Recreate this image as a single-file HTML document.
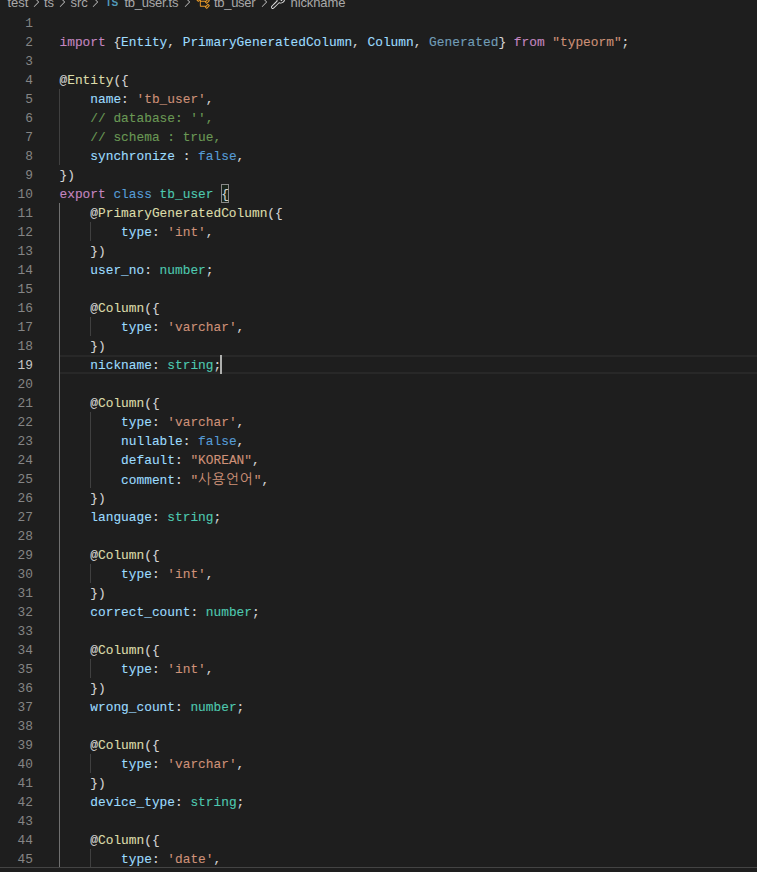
<!DOCTYPE html>
<html lang="en">
<head>
<meta charset="utf-8">
<title>tb_user.ts</title>
<style>
html,body{margin:0;padding:0;background:#1e1e1e;}
body{width:757px;height:872px;overflow:hidden;position:relative;font-family:"Liberation Mono","NanumGothic",monospace;}
#ed{position:absolute;left:0;top:0;width:757px;height:872px;overflow:hidden;background:#1e1e1e;}
.ln{position:absolute;left:0;width:33px;height:19px;line-height:19px;text-align:right;color:#858585;font-size:12.83px;white-space:pre;}
.ln.act{color:#c6c6c6;}
.cl{-webkit-text-stroke:0.1px currentColor;position:absolute;left:59.5px;height:19px;line-height:19px;color:#d4d4d4;font-size:12.83px;white-space:pre;}
.k{color:#c586c0}.b{color:#569cd6}.v{color:#9cdcfe}.s{color:#ce9178}.f{color:#dcdcaa}.t{color:#4ec9b0}.c{color:#6a9955}
.u{color:#9cdcfe;opacity:.67}
.ko{color:#ce9178;font-family:"NanumGothic","Noto Sans CJK KR",sans-serif;font-size:14px;letter-spacing:0.75px;-webkit-text-stroke:0;}
#bm{position:absolute;left:221px;top:184px;width:7.5px;height:19px;box-sizing:border-box;border:1px solid #888;background:rgba(0,100,0,.1)}
.ig{position:absolute;width:1px;background:#404040;}
.ig.a{background:#707070;}
#hl{position:absolute;left:60px;right:0;top:355px;height:15px;border-top:2px solid #282828;border-bottom:2px solid #282828;}
#cur{position:absolute;left:220px;top:355px;width:2px;height:19px;background:#aeafad;}
#bc{position:absolute;left:0;top:-8px;height:22px;line-height:22px;width:757px;color:#a9a9a9;font-family:"Liberation Sans",sans-serif;font-size:13px;white-space:pre;}
#bc span.i{position:absolute;top:0}
#bc svg.ch{position:absolute;top:2px}
#bc span.ts{color:#519aba;font-size:10px;font-weight:bold;top:-0.5px}
#bot{position:absolute;left:0;right:0;top:867px;height:1px;background:#444;}
</style>
</head>
<body>
<div id="ed">
<div id="hl"></div>
<div id="bm"></div>
<div class="ig" style="left:59px;top:89px;height:76px"></div>
<div class="ig a" style="left:59px;top:203px;height:665px"></div>
<div class="ig" style="left:90px;top:222px;height:19px"></div>
<div class="ig" style="left:90px;top:317px;height:19px"></div>
<div class="ig" style="left:90px;top:412px;height:76px"></div>
<div class="ig" style="left:90px;top:564px;height:19px"></div>
<div class="ig" style="left:90px;top:659px;height:19px"></div>
<div class="ig" style="left:90px;top:754px;height:19px"></div>
<div class="ig" style="left:90px;top:849px;height:19px"></div>
<div class="ln" style="top:14px">1</div>
<div class="ln" style="top:33px">2</div>
<div class="cl" style="top:33px"><span class="k">import</span> {<span class="v">Entity</span>, <span class="v">PrimaryGeneratedColumn</span>, <span class="v">Column</span>, <span class="u">Generated</span>} <span class="k">from</span> <span class="s">"typeorm"</span>;</div>
<div class="ln" style="top:52px">3</div>
<div class="ln" style="top:71px">4</div>
<div class="cl" style="top:71px">@<span class="f">Entity</span>({</div>
<div class="ln" style="top:90px">5</div>
<div class="cl" style="top:90px">    <span class="v">name</span>: <span class="s">'tb_user'</span>,</div>
<div class="ln" style="top:109px">6</div>
<div class="cl" style="top:109px">    <span class="c">// database: '',</span></div>
<div class="ln" style="top:128px">7</div>
<div class="cl" style="top:128px">    <span class="c">// schema : true,</span></div>
<div class="ln" style="top:147px">8</div>
<div class="cl" style="top:147px">    <span class="v">synchronize</span> : <span class="b">false</span>,</div>
<div class="ln" style="top:166px">9</div>
<div class="cl" style="top:166px">})</div>
<div class="ln" style="top:185px">10</div>
<div class="cl" style="top:185px"><span class="k">export</span> <span class="b">class</span> <span class="t">tb_user</span> <span class="m">{</span></div>
<div class="ln" style="top:204px">11</div>
<div class="cl" style="top:204px">    @<span class="f">PrimaryGeneratedColumn</span>({</div>
<div class="ln" style="top:223px">12</div>
<div class="cl" style="top:223px">        <span class="v">type</span>: <span class="s">'int'</span>,</div>
<div class="ln" style="top:242px">13</div>
<div class="cl" style="top:242px">    })</div>
<div class="ln" style="top:261px">14</div>
<div class="cl" style="top:261px">    <span class="v">user_no</span>: <span class="t">number</span>;</div>
<div class="ln" style="top:280px">15</div>
<div class="ln" style="top:299px">16</div>
<div class="cl" style="top:299px">    @<span class="f">Column</span>({</div>
<div class="ln" style="top:318px">17</div>
<div class="cl" style="top:318px">        <span class="v">type</span>: <span class="s">'varchar'</span>,</div>
<div class="ln" style="top:337px">18</div>
<div class="cl" style="top:337px">    })</div>
<div class="ln act" style="top:356px">19</div>
<div class="cl" style="top:356px">    <span class="v">nickname</span>: <span class="t">string</span>;</div>
<div class="ln" style="top:375px">20</div>
<div class="ln" style="top:394px">21</div>
<div class="cl" style="top:394px">    @<span class="f">Column</span>({</div>
<div class="ln" style="top:413px">22</div>
<div class="cl" style="top:413px">        <span class="v">type</span>: <span class="s">'varchar'</span>,</div>
<div class="ln" style="top:432px">23</div>
<div class="cl" style="top:432px">        <span class="v">nullable</span>: <span class="b">false</span>,</div>
<div class="ln" style="top:451px">24</div>
<div class="cl" style="top:451px">        <span class="v">default</span>: <span class="s">"KOREAN"</span>,</div>
<div class="ln" style="top:470px">25</div>
<div class="cl" style="top:470px">        <span class="v">comment</span>: <span class="s">"</span><span class="ko">사용언어</span><span class="s">"</span>,</div>
<div class="ln" style="top:489px">26</div>
<div class="cl" style="top:489px">    })</div>
<div class="ln" style="top:508px">27</div>
<div class="cl" style="top:508px">    <span class="v">language</span>: <span class="t">string</span>;</div>
<div class="ln" style="top:527px">28</div>
<div class="ln" style="top:546px">29</div>
<div class="cl" style="top:546px">    @<span class="f">Column</span>({</div>
<div class="ln" style="top:565px">30</div>
<div class="cl" style="top:565px">        <span class="v">type</span>: <span class="s">'int'</span>,</div>
<div class="ln" style="top:584px">31</div>
<div class="cl" style="top:584px">    })</div>
<div class="ln" style="top:603px">32</div>
<div class="cl" style="top:603px">    <span class="v">correct_count</span>: <span class="t">number</span>;</div>
<div class="ln" style="top:622px">33</div>
<div class="ln" style="top:641px">34</div>
<div class="cl" style="top:641px">    @<span class="f">Column</span>({</div>
<div class="ln" style="top:660px">35</div>
<div class="cl" style="top:660px">        <span class="v">type</span>: <span class="s">'int'</span>,</div>
<div class="ln" style="top:679px">36</div>
<div class="cl" style="top:679px">    })</div>
<div class="ln" style="top:698px">37</div>
<div class="cl" style="top:698px">    <span class="v">wrong_count</span>: <span class="t">number</span>;</div>
<div class="ln" style="top:717px">38</div>
<div class="ln" style="top:736px">39</div>
<div class="cl" style="top:736px">    @<span class="f">Column</span>({</div>
<div class="ln" style="top:755px">40</div>
<div class="cl" style="top:755px">        <span class="v">type</span>: <span class="s">'varchar'</span>,</div>
<div class="ln" style="top:774px">41</div>
<div class="cl" style="top:774px">    })</div>
<div class="ln" style="top:793px">42</div>
<div class="cl" style="top:793px">    <span class="v">device_type</span>: <span class="t">string</span>;</div>
<div class="ln" style="top:812px">43</div>
<div class="ln" style="top:831px">44</div>
<div class="cl" style="top:831px">    @<span class="f">Column</span>({</div>
<div class="ln" style="top:850px">45</div>
<div class="cl" style="top:850px">        <span class="v">type</span>: <span class="s">'date'</span>,</div>
<div id="cur"></div>
<div id="bc"><span class="i" style="left:7.5px">test</span><svg class="ch" style="left:28px" width="16" height="16" viewBox="0 0 16 16"><path fill="#b4b4b4" d="M10.072 8.024L5.715 3.667l.618-.62L11 7.716v.618L6.333 13l-.618-.619 4.357-4.357z"/></svg><span class="i" style="left:44px">ts</span><svg class="ch" style="left:53.7px" width="16" height="16" viewBox="0 0 16 16"><path fill="#b4b4b4" d="M10.072 8.024L5.715 3.667l.618-.62L11 7.716v.618L6.333 13l-.618-.619 4.357-4.357z"/></svg><span class="i" style="left:70.5px">src</span><svg class="ch" style="left:87.4px" width="16" height="16" viewBox="0 0 16 16"><path fill="#b4b4b4" d="M10.072 8.024L5.715 3.667l.618-.62L11 7.716v.618L6.333 13l-.618-.619 4.357-4.357z"/></svg><span class="i ts" style="left:105.5px">TS</span><span class="i" style="left:124.5px;letter-spacing:-0.27px">tb_user.ts</span><svg class="ch" style="left:178.6px" width="16" height="16" viewBox="0 0 16 16"><path fill="#b4b4b4" d="M10.072 8.024L5.715 3.667l.618-.62L11 7.716v.618L6.333 13l-.618-.619 4.357-4.357z"/></svg><svg class="ch" style="left:194.7px" width="16" height="16" viewBox="0 0 16 16"><path fill="#ee9d28" d="M11.34 9.71h.71l2.67-2.67v-.71L13.38 5h-.7l-1.82 1.81h-5V5.56l1.86-1.85V3l-2-2H5L1 5v.71l2 2h.71l1.14-1.15v5.79l.5.5H10v.52l1.33 1.34h.71l2.67-2.67v-.71L13.37 10h-.7l-1.86 1.85h-5v-4H10v.48l1.34 1.38zm1.69-3.65l.63.63-2 2-.63-.63 2-2zm0 5l.63.63-2 2-.63-.63 2-2zM3.35 6.65l-1.29-1.3 3.29-3.29 1.3 1.29-3.3 3.3z"/></svg><span class="i" style="left:214px;letter-spacing:-0.3px">tb_user</span><svg class="ch" style="left:255.7px" width="16" height="16" viewBox="0 0 16 16"><path fill="#b4b4b4" d="M10.072 8.024L5.715 3.667l.618-.62L11 7.716v.618L6.333 13l-.618-.619 4.357-4.357z"/></svg><svg class="ch" style="left:270.2px" width="16" height="16" viewBox="0 0 16 16"><path fill="#dcdcdc" d="M2.807 14.975a1.75 1.75 0 0 1-1.255-.556 1.684 1.684 0 0 1-.544-1.1A1.72 1.72 0 0 1 1.36 12.1c1.208-1.27 3.587-3.65 5.318-5.345a4.257 4.257 0 0 1 .048-3.078 4.095 4.095 0 0 1 1.665-1.969 4.259 4.259 0 0 1 4.04-.36l.617.268-2.866 2.951 1.255 1.259 2.944-2.877.267.619a4.295 4.295 0 0 1 .04 3.311 4.198 4.198 0 0 1-.923 1.392 4.27 4.27 0 0 1-.743.581 4.217 4.217 0 0 1-3.812.446c-1.098 1.112-3.84 3.872-5.32 5.254a1.63 1.63 0 0 1-1.084.423zm7.938-13.047a3.32 3.32 0 0 0-1.849.557c-.213.13-.412.284-.591.458a3.321 3.321 0 0 0-.657 3.733l.135.297-.233.227c-1.738 1.697-4.269 4.22-5.485 5.504a.805.805 0 0 0 .132 1.05.911.911 0 0 0 .298.22c.1.044.209.069.319.072a.694.694 0 0 0 .45-.181c1.573-1.469 4.612-4.539 5.504-5.44l.23-.232.294.135a3.286 3.286 0 0 0 3.225-.254 3.33 3.33 0 0 0 .591-.464 3.28 3.28 0 0 0 .964-2.358c0-.215-.021-.43-.064-.642L11.43 7.125 8.879 4.578l2.515-2.59a3.286 3.286 0 0 0-.65-.06z"/></svg><span class="i" style="left:290.5px;letter-spacing:-0.1px">nickname</span></div>
<div id="bot"></div>
</div>
</body>
</html>
